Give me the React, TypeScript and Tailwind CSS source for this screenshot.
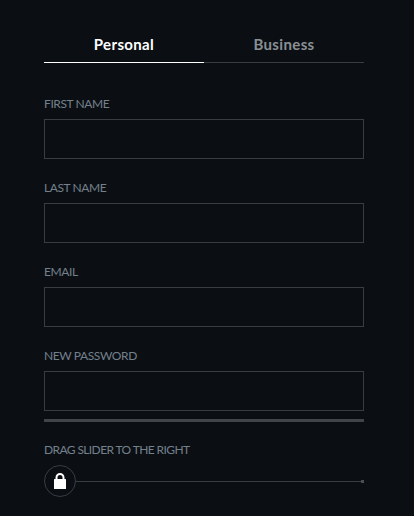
const Field = ({ label }: { label: string }) => (
  <div className="flex flex-col">
    <label className="text-[12px] leading-[16px] tracking-[-0.4px] text-[#74808b] uppercase h-[16px] mb-[7px]">
      {label}
    </label>
    <div className="h-[40px] border border-[#393c42]" />
  </div>
);

const LockIcon = () => (
  <svg width="12" height="16" viewBox="0 0 12 16">
    <path
      d="M2.5 7V4.5a3.5 3.5 0 0 1 7 0V7"
      fill="none"
      stroke="#fff"
      strokeWidth="2"
    />
    <rect x="0" y="6" width="12" height="10" rx="0.5" fill="#fff" />
  </svg>
);

const App = () => {
  return (
    <div
      className="bg-[#0b0f14] h-[516px] w-full overflow-hidden pl-[44px] pr-[50px] pt-[32px]"
      style={{ fontFamily: "Lato, sans-serif" }}
    >
      <div className="flex">
        <div className="flex-1 h-[31px] border-b border-white text-center text-[15px] leading-[24px] tracking-[0.35px] font-bold text-white">
          Personal
        </div>
        <div className="flex-1 h-[31px] border-b border-[#393c42] text-center text-[15px] leading-[24px] tracking-[0.35px] font-bold text-[#8a8f94]">
          Business
        </div>
      </div>
      <div className="flex flex-col gap-[21px] mt-[33px]">
        <Field label="First name" />
        <Field label="Last name" />
        <Field label="Email" />
        <Field label="New password" />
      </div>
      <div className="h-[3px] bg-[#414449] mt-[8px]" />
      <div className="text-[12px] leading-[16px] tracking-[-0.6px] text-[#74808b] uppercase mt-[20px]">
        Drag slider to the right
      </div>
      <div className="flex items-center mt-[7px]">
        <div className="w-[32px] h-[32px] rounded-full border border-[#393c42] flex items-center justify-center shrink-0">
          <LockIcon />
        </div>
        <div className="flex-1 h-px bg-[#393c42]" />
        <div className="w-[3px] h-[3px] bg-[#4a4d52]" />
      </div>
    </div>
  );
};

export default App;
